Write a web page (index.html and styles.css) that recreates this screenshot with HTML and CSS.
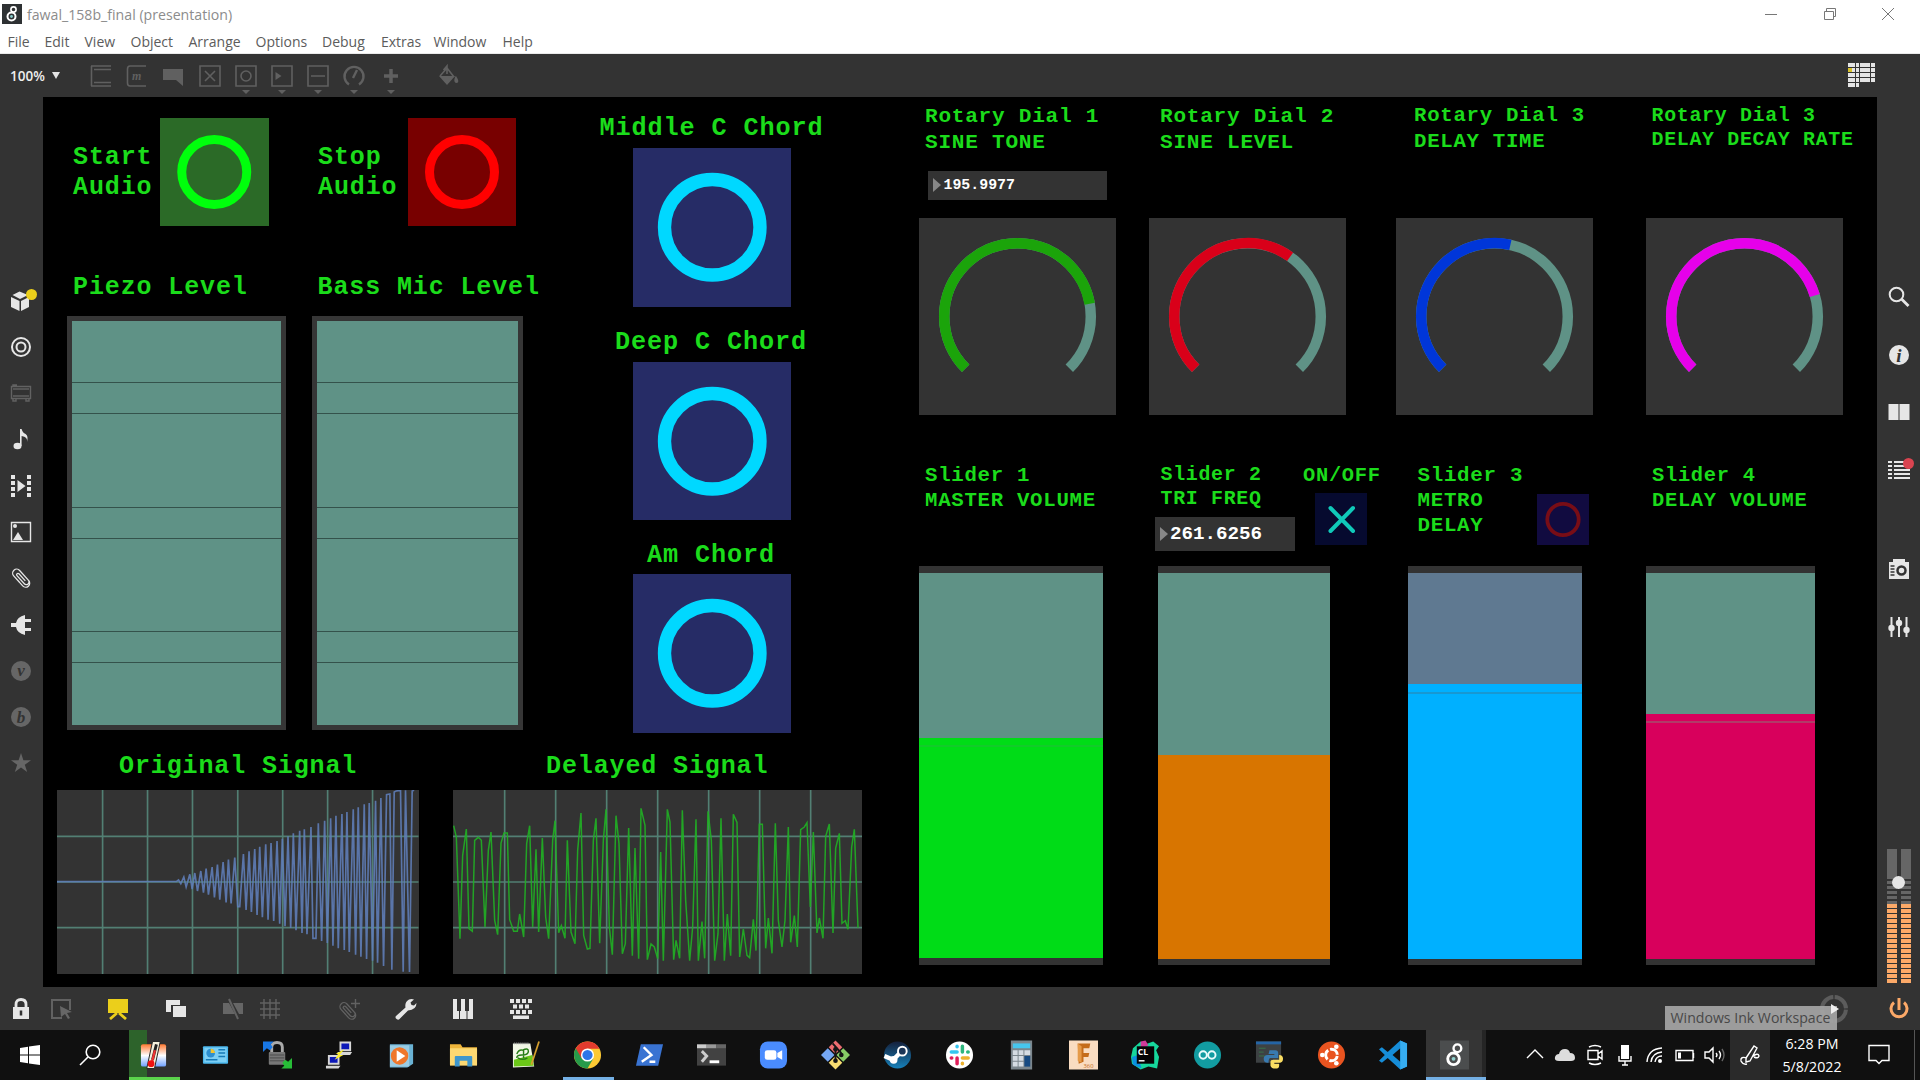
FILE: index.html
```html
<!DOCTYPE html>
<html lang="en">
<head>
<meta charset="utf-8">
<title>fawal_158b_final (presentation)</title>
<link rel="stylesheet" href="styles.css">
</head>
<body>
<header class="titlebar">
  <div class="caption">
    <svg class="app-icon" viewBox="0 0 20 20"><rect width="20" height="20" fill="#2e3133"/><g fill="none" stroke="#fff"><circle cx="9.5" cy="12.5" r="4" stroke-width="2"/><circle cx="11.5" cy="5.5" r="2.6" stroke-width="1.6"/></g><circle cx="9.5" cy="12.5" r="1.4" fill="#8cc"/></svg>
    <span class="caption-text">fawal_158b_final (presentation)</span>
    <div class="window-buttons">
      <svg viewBox="0 0 14 14"><path d="M1 7.500h12"/></svg>
      <svg viewBox="0 0 14 14"><path d="M1.500 4.500h9v8h-9zM3.500 4V1.500h9v8H11"/></svg>
      <svg viewBox="0 0 14 14"><path d="M1 1l12 12M13 1L1 13"/></svg>
    </div>
  </div>
  <nav class="menu"><span>File</span><span>Edit</span><span>View</span><span>Object</span><span>Arrange</span><span>Options</span><span>Debug</span><span>Extras</span><span>Window</span><span>Help</span></nav>
</header>

<div class="toolbar">
  <div class="zoom-level"><span>100%</span><i class="caret"></i></div>
  <div class="tools">
    <svg viewBox="0 0 22 32"><path d="M1 6h20M4 9.500h17M4 22.500h17M1 26h20M1.500 6v20"/></svg>
    <svg viewBox="0 0 22 32"><path d="M20 6H4Q1.500 6 1.500 9v14q0 3 2.500 3h16"/><text x="6" y="19.500" class="tool-m">m</text></svg>
    <svg viewBox="0 0 22 32"><path class="solid" d="M1 9h20v17l-7-6H1z"/></svg>
    <svg viewBox="0 0 22 32"><path d="M1 6h20v20H1zM6 11l10 10M16 11L6 21"/></svg>
    <svg viewBox="0 0 22 32"><path d="M1 6h20v20H1z"/><circle cx="11" cy="16" r="5"/><path class="solid" d="M7 30h8l-4 4z"/></svg>
    <svg viewBox="0 0 22 32"><path d="M1 6h20v20H1z"/><path class="solid" d="M4.500 12l6 4-6 4zM7 30h8l-4 4z"/></svg>
    <svg viewBox="0 0 22 32"><path d="M1 6h20v20H1zM4 16h14"/><path class="solid" d="M7 30h8l-4 4z"/></svg>
    <svg viewBox="0 0 22 32"><path class="bold" d="M6 24.500A9.500 9.500 0 1 1 16 24.500M10 18l4-8"/><path class="solid" d="M7 30h8l-4 4z"/></svg>
    <svg viewBox="0 0 22 32"><path class="heavy" d="M11 9v14M4 16h14"/><path class="solid" d="M7 30h8l-4 4z"/></svg>
    <svg class="bucket" viewBox="0 0 22 32"><path d="M3 16L10 8l7 9M10 14V6L6.500 10"/><path class="solid" d="M2 16h16l-8 9zM19 16q4 6 1 7-4 0-2-6z"/></svg>
  </div>
  <svg class="list-icon" viewBox="0 0 27 25"><path fill="#e4e4e4" d="M0 0h7v4H0zM8 0h3v4H8zM12 0h10v4H12zM23 0h4v4h-4zM4 5h3v4H4zM8 5h3v4H8zM12 5h10v4H12zM23 5h4v4h-4zM0 10h7v4H0zM8 10h3v4H8zM12 10h10v4H12zM23 10h4v4h-4zM0 15h7v4H0zM8 15h3v4H8zM12 15h10v4H12zM23 15h4v4h-4zM0 20h7v4H0zM8 20h3v4H8z"/><path fill="#d9c22c" d="M0 5h4v4H0z"/></svg>
</div>

<main class="workspace">
  <aside class="rail rail-left">
    <svg viewBox="0 0 22 22"><path class="fl" d="M9.500 1.500L18 5l-8 4-7.500-4zM1 7l8.500 4v10L1 17zM11 11l8-4v10l-8 4z"/></svg>
    <svg viewBox="0 0 22 22"><circle class="ln" cx="11" cy="11" r="9"/><circle class="ln" cx="11" cy="11" r="4.500"/></svg>
    <svg class="dim" viewBox="0 0 22 22"><path class="ln thin" d="M1.500 4.500h19v12h-19zM3 7h16M3 14h16M3 17v2h3v-2M16 17v2h3v-2M3 4V3h4"/></svg>
    <svg viewBox="0 0 22 22"><ellipse class="fl" cx="7.500" cy="18" rx="4" ry="3.200"/><path class="fl" d="M10 1h1.600q1 4 4 5 3 2 1.400 8 1-5-5.400-6v10H10z"/></svg>
    <svg viewBox="0 0 22 22"><path class="fl" d="M1 0h4v4H1zM1 6h4v4H1zM1 12h4v4H1zM1 18h4v4H1zM17 0h4v4h-4zM17 6h4v4h-4zM17 12h4v4h-4zM17 18h4v4h-4zM7.500 5l8 6-8 6z"/></svg>
    <svg viewBox="0 0 22 22"><path class="ln thin" d="M1.500 1.500h19v19h-19z"/><circle class="fl" cx="5" cy="5" r="2"/><path class="fl" d="M3 19l5-8 5 8z"/></svg>
    <svg viewBox="0 0 22 22"><path class="ln clip" d="M-4 2.500V-6.500a4 4 0 0 1 8 0V6.500a2.700 2.700 0 0 1-5.400 0V-4.500a1.300 1.300 0 0 1 2.700 0V5M-4 2v5a4 4 0 0 0 8 0" transform="translate(11 11) rotate(-42)"/></svg>
    <svg viewBox="0 0 22 22"><path class="fl" d="M15 1v4h6v3h-6v6h6v3h-6v4Q7 19 6 13H1V9h5Q7 3 15 1z"/></svg>
    <svg class="dim" viewBox="0 0 22 22"><circle class="fl" cx="11" cy="11" r="10"/><text class="badge-letter" x="11" y="16" text-anchor="middle">v</text></svg>
    <svg class="dim" viewBox="0 0 22 22"><circle class="fl" cx="11" cy="11" r="10"/><text class="badge-letter" x="11" y="17" text-anchor="middle">b</text></svg>
    <svg class="dim" viewBox="0 0 22 22"><path class="fl" d="M11 1l2.400 7.300H21l-6.200 4.500 2.400 7.300L11 15.600l-6.200 4.500 2.400-7.300L1 8.300h7.600z"/></svg>
    <i class="notice notice-yellow"></i>
  </aside>

  <section class="patcher">
    <div class="obj label start-label">Start<br>Audio</div>
    <svg class="obj bang start" viewBox="0 0 108 108"><circle cx="54" cy="54" r="32.500"/></svg>
    <div class="obj label stop-label">Stop<br>Audio</div>
    <svg class="obj bang stop" viewBox="0 0 108 108"><circle cx="54" cy="54" r="32.500"/></svg>
    <div class="obj label piezo-label">Piezo Level</div>
    <div class="obj meter piezo"><i></i><i></i><i></i><i></i><i></i><i></i></div>
    <div class="obj label bass-label">Bass Mic Level</div>
    <div class="obj meter bass"><i></i><i></i><i></i><i></i><i></i><i></i></div>

    <div class="obj label middle-label">Middle C Chord</div>
    <svg class="obj bang chord chord-middle" viewBox="0 0 158 158"><circle cx="79" cy="79" r="47.600"/></svg>
    <div class="obj label deep-label">Deep C Chord</div>
    <svg class="obj bang chord chord-deep" viewBox="0 0 158 158"><circle cx="79" cy="79" r="47.600"/></svg>
    <div class="obj label am-label">Am Chord</div>
    <svg class="obj bang chord chord-am" viewBox="0 0 158 158"><circle cx="79" cy="79" r="47.600"/></svg>

    <div class="obj label original-label">Original Signal</div>
    <svg class="obj scope scope-original" viewBox="171 149 1086 552" preserveAspectRatio="none">
      <path class="grid" d="M308 149v552M443 149v552M578 149v552M714 149v552M849 149v552M984 149v552M1119 149v552M171 288h1086M171 425h1086M171 562h1086"/>
      <polyline class="wave-blue" points="171,424 530,423 536,419 543,430 552,410 559,440 570,402 577,446 585,398 593,452 603,392 611,457 619,385 626,463 637,380 644,471 653,373 660,478 670,365 679,486 686,358 694,489 705,352 714,499 720,499 731,341 739,509 748,333 755,515 765,326 772,524 780,319 788,531 798,312 805,538 814,308 822,542 832,302 840,550 848,295 856,558 865,288 873,563 881,279 889,570 900,271 907,578 914,267 922,582 934,260 940,594 949,594 956,249 966,602 975,241 983,608 993,234 1000,616 1009,226 1016,624 1027,221 1034,629 1042,215 1049,635 1061,207 1068,643 1076,201 1084,649 1094,192 1101,656 1109,188 1119,661 1128,181 1134,667 1144,173 1152,677 1161,163 1171,161 1177,688 1184,155 1190,152 1203,150 1211,694 1218,150 1230,695 1238,152 1244,150"/>
    </svg>
    <div class="obj label delayed-label">Delayed Signal</div>
    <svg class="obj scope scope-delayed" viewBox="39 149 1227 552" preserveAspectRatio="none">
      <path class="grid" d="M194 149v552M347 149v552M500 149v552M653 149v552M806 149v552M959 149v552M1112 149v552M39 288h1227M39 425h1227M39 562h1227"/>
      <polyline class="wave-green" points="41,256 49,290 60,595 68,345 79,266 87,565 97,573 104,300 115,291 124,300 135,560 145,330 153,275 164,540 173,583 183,308 192,278 202,278 209,538 221,573 232,573 239,521 251,590 260,310 269,256 278,560 288,327 296,575 307,293 317,530 326,595 338,300 345,241 356,577 364,556 375,594 382,300 393,575 405,610 413,330 423,218 431,585 442,626 450,624 460,300 468,234 479,609 490,300 498,207 508,560 517,643 528,226 537,310 547,640 556,610 566,263 577,646 585,323 596,655 603,204 615,255 622,658 633,611 643,620 653,655 662,335 670,661 682,207 690,245 701,658 708,600 719,654 727,210 737,480 749,661 758,560 768,237 775,661 786,544 794,654 804,213 814,300 824,661 834,580 843,234 853,661 862,521 872,646 880,222 891,246 899,650 910,566 921,645 929,652 940,537 948,631 958,252 967,252 977,624 985,533 996,639 1006,249 1015,540 1026,620 1035,540 1045,260 1052,606 1063,526 1072,620 1082,268 1093,260 1101,247 1111,500 1120,275 1131,578 1138,533 1149,594 1157,288 1168,251 1179,578 1187,323 1198,279 1206,549 1216,541 1224,567 1235,320 1243,267 1254,562"/>
    </svg>

    <div class="obj label dial1-label">Rotary Dial 1<br>SINE TONE</div>
    <div class="obj label dial2-label">Rotary Dial 2<br>SINE LEVEL</div>
    <div class="obj label dial3-label">Rotary Dial 3<br>DELAY TIME</div>
    <div class="obj label dial4-label">Rotary Dial 3<br>DELAY DECAY RATE</div>
    <div class="obj number number-sine"><i></i>195.9977</div>
    <svg class="obj dial dial1" viewBox="0 0 197 197"><path d="M46.700 150.300A73.300 73.300 0 1 1 150.300 150.300"/><path class="value" pathLength="270" stroke-dasharray="215 400" d="M46.700 150.300A73.300 73.300 0 1 1 150.300 150.300"/></svg>
    <svg class="obj dial dial2" viewBox="0 0 197 197"><path d="M46.700 150.300A73.300 73.300 0 1 1 150.300 150.300"/><path class="value" pathLength="270" stroke-dasharray="170.500 400" d="M46.700 150.300A73.300 73.300 0 1 1 150.300 150.300"/></svg>
    <svg class="obj dial dial3" viewBox="0 0 197 197"><path d="M46.700 150.300A73.300 73.300 0 1 1 150.300 150.300"/><path class="value" pathLength="270" stroke-dasharray="147.500 400" d="M46.700 150.300A73.300 73.300 0 1 1 150.300 150.300"/></svg>
    <svg class="obj dial dial4" viewBox="0 0 197 197"><path d="M46.700 150.300A73.300 73.300 0 1 1 150.300 150.300"/><path class="value" pathLength="270" stroke-dasharray="208.500 400" d="M46.700 150.300A73.300 73.300 0 1 1 150.300 150.300"/></svg>

    <div class="obj label slider1-label">Slider 1<br>MASTER VOLUME</div>
    <div class="obj label slider2-label">Slider 2<br>TRI FREQ</div>
    <div class="obj label onoff-label">ON/OFF</div>
    <div class="obj label slider3-label">Slider 3<br>METRO<br>DELAY</div>
    <div class="obj label slider4-label">Slider 4<br>DELAY VOLUME</div>
    <div class="obj number number-tri"><i></i>261.6256</div>
    <svg class="obj toggle" viewBox="0 0 52 52"><path d="M15.500 15l22.500 23M38 15L15.500 38"/></svg>
    <svg class="obj bang metro" viewBox="0 0 52 51"><circle cx="26" cy="25.500" r="15.700"/></svg>
    <div class="obj slider slider1"><i></i></div>
    <div class="obj slider slider2"><i></i></div>
    <div class="obj slider slider3"><i></i></div>
    <div class="obj slider slider4"><i></i></div>
  </section>

  <aside class="rail rail-right">
    <svg viewBox="0 0 22 22"><circle class="ln" cx="8.500" cy="8.500" r="6.800"/><path class="ln wide" d="M13.500 13l7 7"/></svg>
    <svg viewBox="0 0 22 22"><circle class="fl" cx="11" cy="11" r="10"/><text class="info-letter" x="11" y="17.500" text-anchor="middle">i</text></svg>
    <svg viewBox="0 0 22 22"><path class="fl" d="M.5 3h10v16H.5zM11.500 3h10v16h-10z"/></svg>
    <svg viewBox="0 0 22 22"><path class="fl" d="M0 2h4v2H0zM6 2h16v2H6zM0 6h4v2H0zM6 6h16v2H6zM0 10h4v2H0zM6 10h16v2H6zM0 14h4v2H0zM6 14h16v2H6zM0 18h4v2H0zM6 18h16v2H6z"/></svg>
    <svg class="camera" viewBox="0 0 22 22"><path class="fl" d="M5 1h12v3h4v17H1V4h4z"/><circle cx="13.500" cy="12.500" r="4" fill="none" stroke="#333" stroke-width="2.500"/><path stroke="#333" stroke-width="1.300" d="M2.500 8h4M2.500 11h4M2.500 14h4M2.500 17h4"/></svg>
    <svg viewBox="0 0 22 22"><path class="ln" d="M3.500 1v20M11 1v20M18.500 1v20"/><g class="fl"><circle cx="3.500" cy="12" r="3.200"/><circle cx="11" cy="7" r="3.200"/><circle cx="18.500" cy="14" r="3.200"/></g></svg>
    <div class="gain"><i></i><i></i><b></b></div>
    <i class="notice notice-red"></i>
  </aside>
</main>

<footer class="bottombar">
  <svg viewBox="0 0 22 22"><path class="ln wide" d="M6 10V6.500q0-5 5-5t5 5V10"/><path class="fl" d="M3 9h16v12H3z"/><path d="M11 12.500v5" stroke="#333" stroke-width="2.500"/></svg>
  <svg class="dim" viewBox="0 0 22 22"><path class="ln" d="M12 20H2V2h18v10"/><path class="fl" d="M10 8l12 6-5 1 3 5-2 1-3-5-4 3z"/></svg>
  <svg class="yellow" viewBox="0 0 22 22"><path class="fl" d="M1 1h20v14H1z"/><path class="ln wide" d="M10 15l-7 6M12 15l7 6"/></svg>
  <svg viewBox="0 0 22 22"><path class="fl" d="M1 2h14v5H6v7H1zM8 8h13v11H8z"/></svg>
  <svg class="dim" viewBox="0 0 22 22"><path class="fl" d="M1 5h6l6 11H1zM11 5h10v11h-4z"/><path class="ln" d="M7 1l9 20"/></svg>
  <svg class="dim" viewBox="0 0 22 22"><path class="ln thin" d="M5 1v20M11 1v20M17 1v20M1 5h20M1 11h20M1 17h20"/></svg>
  <svg class="dim" viewBox="0 0 22 22"><path class="ln clip" d="M-4 2.500V-4.500a4 4 0 0 1 8 0V6.500a2.700 2.700 0 0 1-5.400 0V-3.500a1.300 1.300 0 0 1 2.700 0V5M-4 2v5a4 4 0 0 0 8 0" transform="translate(9 12) rotate(-42)"/><path class="ln thin" d="M17.500 1v9M13 5.500h9"/></svg>
  <svg viewBox="0 0 22 22"><path class="fl" d="M1 18L10.500 9.500Q9.500 4 14 1.500q2.500-1 5 0L15.500 4.500l1 2.500 2.500.5L21.500 5q0 7-8.500 7.500L4 21.500q-2 .5-3-1t0-2.500z"/></svg>
  <svg viewBox="0 0 22 22"><path class="fl" d="M1 1h4v12h2v8H1zM9 1h4v12h1.500v8H8v-8h1zM17 1h4v20h-5.500v-8H17z"/></svg>
  <svg viewBox="0 0 22 22"><path class="fl" d="M0 1h4v4H0zM6 1h4v4H6zM12 1h4v4h-4zM18 1h4v4h-4zM3 6.500h4v4H3zM9 6.500h4v4H9zM15 6.500h4v4h-4zM0 12h4v4H0zM6 12h4v4H6zM12 12h4v4h-4zM18 12h4v4h-4zM3 17.500h16v3.500H3z"/></svg>
  <svg class="transport" viewBox="0 0 30 30"><circle cx="15" cy="15" r="12" pathLength="80" stroke-dasharray="18.500 1.500" stroke-dashoffset="-.75"/></svg>
  <svg class="power" viewBox="0 0 22 22"><path d="M6 4.500a8 8 0 1 0 10 0M11 0v12"/></svg>
  <div class="tooltip">Windows Ink Workspace</div>
  <i class="play"></i>
</footer>

<div class="taskbar">
  <div class="cell start-cell"><svg width="20" height="20" viewBox="0 0 20 20"><path fill="#fff" d="M0 3l8-1.200v7.700H0zM9 1.600L20 0v9.500H9zM0 10.500h8v7.700L0 17zM9 10.500h11V20L9 18.400z"/></svg></div>
  <div class="cell search-cell"><svg width="22" height="22" viewBox="0 0 22 22"><g fill="none" stroke="#fff" stroke-width="1.600"><circle cx="14" cy="8" r="6.800"/><path d="M9 13l-8 8"/></g></svg></div>
  <div class="apps">
    <div class="cell thermo-cell"><svg viewBox="0 0 30 30"><defs><linearGradient id="heat" x2="0" y2="1"><stop stop-color="#ff7a33"/><stop offset=".5" stop-color="#fff"/><stop offset="1" stop-color="#6fa0ff"/></linearGradient></defs><rect x="2" y="4" width="26" height="23" rx="2" fill="url(#heat)"/><path d="M14 1h8l-6 28H8z" fill="#f5f0dc" stroke="#222"/><path d="M18 4L14 20" stroke="#222" stroke-width="3"/><path d="M16.500 10l-3 12" stroke="#e33" stroke-width="2.400"/><circle cx="12.500" cy="24" r="3.500" fill="#e11"/></svg></div>
    <div class="cell"><svg viewBox="0 0 30 30"><rect x="2" y="6" width="26" height="18" rx="1" fill="#4bb8ee"/><rect x="3.500" y="7.500" width="23" height="15" fill="#7ccff5"/><circle cx="10" cy="13" r="4.500" fill="#2d8fd0"/><path d="M10 13V8.500a4.500 4.500 0 0 1 4.500 4.500z" fill="#f0c531"/><path d="M18 9.500h7M18 13h7M18 16.500h7M5 20h12" stroke="#167bb8" stroke-width="1.500"/></svg></div>
    <div class="cell"><svg viewBox="0 0 30 30"><path d="M9 13V7q0-5 5.500-5T20 7v6" fill="none" stroke="#aaa" stroke-width="3"/><rect x="6" y="12" width="17" height="13" rx="1" fill="#777"/><path d="M7 15h15M7 18h15M7 21h15" stroke="#4c4c4c"/><path d="M0 1h11L8 4l2 3-3 3-3-2-4 4z" fill="#1877e6"/><path d="M30 18v11H19l3-3-2-3 3-3 3 2z" fill="#27bd37"/></svg></div>
    <div class="cell"><svg viewBox="0 0 30 30"><g fill="#d7d7d7"><path d="M15 1h12v10H15zM13 12h15l-2 3H13zM3 15h12v10H3zM1 26h15l-2 3H1z"/></g><path fill="#0c18b9" d="M17 3h8v6h-8zM5 17h8v6H5z"/><path d="M20 9l-5 6h4l-9 5 4-6h-3z" fill="#ffef28"/></svg></div>
    <div class="cell"><svg viewBox="0 0 30 30"><path d="M3 4h24v20l-6 4H3z" fill="#6ab2d4"/><path d="M3 5h20v22H3z" fill="#9bcce3"/><circle cx="13" cy="16" r="9" fill="#ef772b"/><path fill="#fff" d="M10 10l9 6-9 6z"/></svg></div>
    <div class="cell"><svg viewBox="0 0 30 30"><path d="M1 4h11l2 3h15v18H1z" fill="#efb53a"/><path d="M1 8h28v18H1z" fill="#fcd872"/><path d="M6 27V17q0-1 1-1h16q1 0 1 1v10h-5v-6h-8v6z" fill="#3e96cc"/></svg></div>
    <div class="cell"><svg viewBox="0 0 30 30"><path d="M2 3h18l4 24-22 1z" fill="#f2f7e6"/><path d="M3 20l19-5 1.500 11L3 27z" fill="#6bc718"/><path d="M6 14q2-5 6-4 6-3 6 1 0 4-7 4-5 0-5 3M7 18q5 3 10 0M13 10v8" stroke="#287d18" stroke-width="1.500" fill="none"/><path d="M29 1L21 25" stroke="#d6a02e" stroke-width="1.800"/><path d="M3 3h16" stroke="#999" stroke-dasharray="1 1" stroke-width="2"/></svg></div>
    <div class="cell chrome-cell"><svg viewBox="0 0 30 30"><circle cx="15" cy="15" r="14" fill="#fcc934"/><path d="M2.900 8a14 14 0 0 0 12.100 21l6-10.500L15 15z" fill="#279b4a"/><path d="M15 8.500h12.300A14 14 0 0 0 2.900 8l6 10.500z" fill="#e33b2e"/><circle cx="15" cy="15" r="6.800" fill="#fff"/><circle cx="15" cy="15" r="5.300" fill="#2d75e8"/></svg></div>
    <div class="cell"><svg viewBox="0 0 30 30"><path d="M6 4h23l-5 22H1z" fill="#3973d2"/><path d="M9 7l8 8-10 7M15 22h6" fill="none" stroke="#fff" stroke-width="2.500"/></svg></div>
    <div class="cell"><svg viewBox="0 0 30 30"><path d="M0 4h30v22H0z" fill="#424242"/><path d="M0 4h10v4H0z" fill="#ccc"/><path d="M10 4h10v4H10z" fill="#999"/><path d="M20 4h10v4H20z" fill="#666"/><path d="M5 11l5 5-5 6" fill="none" stroke="#ccc" stroke-width="3"/><path d="M13 20.500h10v3H13z" fill="#fff"/></svg></div>
    <div class="cell"><svg viewBox="0 0 30 30"><rect x="1" y="1" width="28" height="28" rx="8" fill="#4a8cff"/><rect x="6" y="10" width="12" height="10" rx="2.500" fill="#fff"/><path fill="#fff" d="M19 13l5-3v10l-5-3z"/></svg></div>
    <div class="cell"><svg viewBox="0 0 30 30"><path d="M15 0l7 7-7 7-7-7z" fill="#ee6d70"/><path d="M7 8l7 7-7 7-7-7z" fill="#75a7f3"/><path d="M23 8l7 7-7 7-7-7z" fill="#87cc66"/><path d="M15 16l7 7-7 7-7-7z" fill="#f9dd71"/><path d="M12 3l9 10M15 7v14" stroke="#161616" stroke-width="2"/><g fill="#161616"><circle cx="15" cy="21" r="2.400"/><circle cx="21" cy="15" r="2.400"/><circle cx="15" cy="9" r="2.400"/></g></svg></div>
    <div class="cell"><svg viewBox="0 0 30 30"><defs><linearGradient id="steam" x2="0" y2="1"><stop stop-color="#15203b"/><stop offset="1" stop-color="#1681ba"/></linearGradient></defs><circle cx="15" cy="15" r="14" fill="url(#steam)"/><path d="M1.500 16l9 4 7-7" stroke="#fff" stroke-width="4.500" fill="none"/><circle cx="20" cy="11" r="4.500" stroke="#fff" stroke-width="2" fill="#1b3556"/><circle cx="11" cy="20" r="4" fill="#fff"/></svg></div>
    <div class="cell"><svg viewBox="0 0 30 30"><circle cx="15" cy="15" r="14" fill="#fff"/><g stroke-width="3.600" stroke-linecap="round"><path d="M12.500 6v.5M6.500 12h6" stroke="#36c5f0"/><path d="M18 6v6M23.500 12h.5" stroke="#2eb67d"/><path d="M12.500 18v6M6.500 18h.5" stroke="#e01e5a"/><path d="M18 24v-.5M18 18h6" stroke="#ecb22e"/></g></svg></div>
    <div class="cell"><svg viewBox="0 0 30 30"><path d="M4 0h22v30H4z" fill="#7b868d"/><path d="M6 3h18v5H6z" fill="#46c6ee"/><path d="M6 10h5v5H6zM12 10h5v5h-5zM18 10h6v5h-6zM6 16h5v5H6zM12 16h5v5h-5zM6 22h5v5H6zM12 22h5v5h-5z" fill="#d5dce3"/><path d="M18 16h6v11h-6z" fill="#164a82"/></svg></div>
    <div class="cell"><svg viewBox="0 0 30 30"><path d="M0 0h30v30H0z" fill="#f9dcc1"/><path d="M9 3h13l-1 5h-6v5h6l-1 4h-5v5l-5 2z" fill="#c56c1a"/><path d="M9 3l4 3v17l-4-2z" fill="#e59a49"/><text x="15" y="28.500" font-family="Open Sans" font-size="6" fill="#c56c1a">360</text></svg></div>
    <div class="cell"><svg viewBox="0 0 30 30"><path d="M2 8L10 1l5 3 8-3 6 5-3 4 3 7-2 12-9-2-8 3-9-6-1-7z" fill="#16d79c"/><path d="M1 17l6-2 4 14-9-4z" fill="#0c91df"/><path d="M10 1l5-1 3 5-8 4z" fill="#cf3b99"/><path d="M6 6h18v18H6z" fill="#050505"/><text x="7" y="15" font-family="Open Sans" font-weight="700" font-size="9" fill="#fff">CL</text><path d="M8 21h6" stroke="#fff" stroke-width="1.500"/></svg></div>
    <div class="cell"><svg viewBox="0 0 30 30"><circle cx="15" cy="15" r="14" fill="#129ca1"/><g fill="none" stroke="#e9fbfb" stroke-width="2"><circle cx="10.500" cy="15" r="3.800"/><circle cx="19.500" cy="15" r="3.800"/></g></svg></div>
    <div class="cell"><svg viewBox="0 0 30 30"><path d="M1 1h26v22H1z" fill="#3d4143"/><path d="M1 1h26v3H1z" fill="#2464a5"/><path d="M4 8h7M4 12h5M4 16h6" stroke="#38734a"/><path d="M15 10h6q3 0 3 3v5h-8q-2 0-2 5h-1q-4 0-4-4t4-4h7v-1h-6z" fill="#387ab0"/><path d="M25 15q4 0 4 4t-4 4h-5v1h5v2q0 3-4 3t-5-3v-4q0-2 3-2h6z" fill="#fadd62"/></svg></div>
    <div class="cell"><svg viewBox="0 0 30 30"><circle cx="15" cy="15" r="14" fill="#e95420"/><circle cx="15" cy="15" r="6" fill="none" stroke="#fff" stroke-width="3" stroke-dasharray="10.500 2" stroke-dashoffset="-1"/><g fill="#fff"><circle cx="5.500" cy="15" r="2.400"/><circle cx="20" cy="6.500" r="2.400"/><circle cx="20" cy="23.500" r="2.400"/></g></svg></div>
    <div class="cell"><svg viewBox="0 0 30 30"><path d="M22 0l7 3v24l-7 3L9 18l-6 5-3-2 6-6-6-6 3-2 6 5zM22 8l-8 7 8 7z" fill="#168dd8" fill-rule="evenodd"/><path d="M22 0l7 3v24l-7 3z" fill="#36adf1"/></svg></div>
    <div class="cell max-cell"><svg viewBox="0 0 30 30"><path d="M0 0h30v30H0z" fill="#4b4d4e"/><g fill="none" stroke="#fff"><circle cx="14" cy="19" r="6" stroke-width="3"/><circle cx="18" cy="8" r="4" stroke-width="2.500"/></g><circle cx="14" cy="19" r="2" fill="#8fd0cd"/></svg></div>
  </div>
  <div class="tray">
    <svg viewBox="0 0 22 22"><path d="M3 14l8-8 8 8"/></svg>
    <svg viewBox="0 0 22 22"><path d="M5 17q-5 0-4-4 1-3 4-3 1-5 6-5 4 0 5 4 5 0 5 5 0 3-4 3z" fill="#ddd" stroke="none"/></svg>
    <svg viewBox="0 0 22 22"><path d="M4 6.500h10v9H4zM14 10l4-3v8l-4-3M5 3q6-3 12 0M5 19q6 3 12 0"/></svg>
    <svg viewBox="0 0 22 22"><rect x="7" y="1" width="8" height="14" fill="#fff" stroke="none"/><path d="M5 12v5h12v-5M11 17v4M8 21h6"/></svg>
    <svg viewBox="0 0 22 22"><path d="M3 18Q4 5 18 4M7 18Q8 9 18 8M11 18q1-6 7-6"/><circle cx="16" cy="17" r="2" fill="#fff" stroke="none"/></svg>
    <svg viewBox="0 0 22 22"><path d="M2 6.500h17v10H2zM19.500 9v5"/><path d="M4 8.500h3v6H4z" fill="#fff" stroke="none"/></svg>
    <svg viewBox="0 0 22 22"><path d="M1 8h4l4-4v14l-4-4H1zM12 9q2 2 0 4M15 7q3 4 0 8"/><path d="M18 5q4 6 0 12" stroke="#666"/></svg>
    <div class="ink"><svg viewBox="0 0 22 22"><path d="M7 14L15 2l3 2-7 13-4 1zM8 14q-7-2-6 3 2 4 6 3M13 13q6-5 7-1-1 3-5 1"/></svg></div>
    <div class="clock"><span>6:28 PM</span><span>5/8/2022</span></div>
    <svg class="action-center" viewBox="0 0 22 22"><path d="M1 1.500h20v15h-7l-3 3-3-3H1z"/></svg>
    <i class="peek"></i>
  </div>
</div>
</body>
</html>
```
FILE: styles.css
```css
* { box-sizing: border-box; }
body {
  margin: 0; width: 1920px; height: 1080px; overflow: hidden;
  display: grid; grid-template-rows: 54px 43px 890px 43px 50px;
  background: #333; font-family: "Open Sans", "Noto Sans", sans-serif;
}
svg { display: block; }

/* Title bar and menu */
.titlebar { background: #fff; border-bottom: 1px solid #eaeaea; }
.caption { display: flex; align-items: center; height: 28px; padding-left: 2px; }
.app-icon { width: 20px; height: 20px; }
.caption-text { margin-left: 5px; font-size: 14.150px; color: #8c8c8c; white-space: nowrap; }
.window-buttons { margin-left: auto; display: flex; gap: 44.500px; padding-right: 25px; }
.window-buttons svg { width: 14px; height: 14px; fill: none; stroke: #777; stroke-width: 1; }
.menu {
  display: grid; grid-template-columns: 37px 40px 46px 58px 67px 66.500px 59px 52.500px 69px 50px;
  padding: 1px 0 0 7.500px; font-size: 14px; line-height: 26px; color: #5c5c5c;
}

/* Top toolbar */
.toolbar { display: flex; align-items: center; padding-right: 45px; }
.zoom-level { display: flex; align-items: center; gap: 7px; width: 90px; padding-left: 10px; color: #eee; font-size: 13.500px; font-weight: 600; }
.caret { border: 4px solid transparent; border-top: 7px solid #e4e4e4; border-bottom: 0; }
.tools { display: flex; gap: 14.200px; }
.tools svg { width: 22px; height: 32px; overflow: visible; fill: none; stroke: #606060; stroke-width: 1.600; }
.tools .solid { fill: #606060; stroke: none; }
.tools .bold { stroke-width: 2.400; }
.tools .heavy { stroke-width: 3.500; }
.tool-m { font: italic 700 12px "Liberation Serif", serif; fill: #606060; stroke: none; }
.tools .bucket { margin-left: 21px; }
.list-icon { width: 27px; height: 25px; margin-left: auto; }

/* Side rails */
.workspace { display: grid; grid-template-columns: 43px 1834px 43px; }
.rail { position: relative; display: flex; flex-direction: column; align-items: center; }
.rail svg, .bottombar svg { width: 22px; height: 22px; flex: none; }
.fl { fill: #e6e6e6; }
.ln { fill: none; stroke: #e6e6e6; stroke-width: 2; }
.thin { stroke-width: 1.400; }
.wide { stroke-width: 2.800; }
.clip { stroke-width: 1.300; }
.dim .fl { fill: #666; }
.dim .ln { stroke: #626262; }
.yellow .fl { fill: #ebcf1b; }
.yellow .ln { stroke: #ebcf1b; }
.badge-letter { font: italic 700 17px "Liberation Serif", serif; fill: #333; }
.info-letter { font: italic 700 19px "Liberation Serif", serif; fill: #333; }
.rail-left { padding: 192.500px 1px 0 0; gap: 24.300px; }
.rail-right { padding-top: 189px; gap: 35.600px; }
.camera { margin-top: 42px; }
.notice { position: absolute; border-radius: 50%; width: 11px; height: 11px; }
.notice-yellow { left: 26px; top: 192px; background: #ebcf1b; }
.notice-red { left: 26px; top: 361px; background: #da4450; }
.gain { position: relative; display: flex; gap: 4px; height: 135px; margin-top: 175px; }
.gain i {
  width: 10px;
  background:
    repeating-linear-gradient(to bottom, transparent 0 4px, #333 4px 5px) 0 55px / 100% 80px no-repeat,
    linear-gradient(#fca968, #fca968) 0 55px / 100% 80px no-repeat,
    repeating-linear-gradient(to bottom, #333 0 2px, #666 2px 5px) 0 30px / 100% 25px no-repeat,
    #666;
}
.gain b { position: absolute; left: 5.500px; top: 27.500px; width: 13px; height: 13px; border-radius: 50%; background: #e6e6e6; }

/* Patcher canvas: --x and --y are window coordinates of each object */
.patcher { position: relative; background: #000; overflow: hidden; }
.obj {
  position: absolute; left: calc(var(--x) * 1px - 43px); top: calc(var(--y) * 1px - 97px);
  width: calc(var(--w) * 1px); height: calc(var(--h) * 1px);
}
.label {
  width: auto; height: auto; white-space: nowrap; color: #1bdc1b;
  font: 700 25px/30px "Courier New", "Liberation Mono", monospace; letter-spacing: .035em;
}
.start-label { --x: 73; --y: 142.500; }
.stop-label { --x: 318; --y: 142.500; }
.piezo-label { --x: 73; --y: 272.500; }
.bass-label { --x: 317.500; --y: 272.500; }
.middle-label { --x: 599.500; --y: 114; font-size: 25.200px; }
.deep-label { --x: 615; --y: 327.500; font-size: 25.200px; }
.am-label { --x: 647; --y: 540.500; font-size: 25.200px; }
.original-label { --x: 119; --y: 751.500; }
.delayed-label { --x: 546; --y: 751.500; }
.dial1-label { --x: 925; --y: 102.500; font-size: 21.100px; line-height: 26px; }
.dial2-label { --x: 1160; --y: 102.500; font-size: 21.100px; line-height: 26px; }
.dial3-label { --x: 1414; --y: 102.500; font-size: 20.700px; line-height: 26px; }
.dial4-label { --x: 1651.500; --y: 104.200; font-size: 19.900px; line-height: 24px; }
.slider1-label { --x: 925; --y: 462.500; font-size: 20.700px; line-height: 25.300px; }
.slider2-label { --x: 1160.500; --y: 462.500; font-size: 19.900px; line-height: 24px; }
.onoff-label { --x: 1303; --y: 462.500; font-size: 20.400px; line-height: 25px; }
.slider3-label { --x: 1417.500; --y: 462.900; font-size: 20.800px; line-height: 25.300px; }
.slider4-label { --x: 1652; --y: 462.500; font-size: 20.400px; line-height: 25px; }

.bang circle { fill: none; }
.start { --x: 160; --y: 118; --w: 108.500; --h: 108; background: #2b6a27; stroke: #00ff0c; stroke-width: 9px; }
.stop { --x: 408; --y: 118; --w: 108; --h: 108; background: #780000; stroke: #f00; stroke-width: 9px; }
.chord { --x: 632.500; --w: 158.500; --h: 158.500; background: #262c66; stroke: #00d8ff; stroke-width: 13.300px; }
.chord-middle { --y: 148; }
.chord-deep { --y: 361.500; }
.chord-am { --y: 574; }
.metro { --x: 1537; --y: 494; --w: 52; --h: 51; background: #110b40; stroke: #780d16; stroke-width: 3.800px; }
.toggle { --x: 1315; --y: 493; --w: 52; --h: 52; background: #060a2f; stroke: #10c9b9; stroke-width: 4px; stroke-linecap: round; }

.meter { display: flex; flex-direction: column; background: #5f9286; border: 5px solid #363636; padding-top: 61px; gap: 30px; }
.meter i { height: 1px; background: #34524b; }
.meter i:nth-child(even) { margin-bottom: 63px; }
.meter i:nth-child(4) { margin-bottom: 62px; }
.meter i:last-child { margin-bottom: 0; }
.piezo { --x: 67; --y: 316; --w: 219; --h: 414; }
.bass { --x: 312; --y: 316; --w: 211; --h: 414; }

.scope { background: #333; }
.grid { fill: none; stroke: #527f73; stroke-width: 5; }
.wave-blue { fill: none; stroke: #607eba; stroke-width: 5; stroke-opacity: .88; }
.wave-green { fill: none; stroke: #20b024; stroke-width: 4.500; stroke-opacity: .9; }
.scope-original { --x: 57; --y: 789.500; --w: 361.500; --h: 184; }
.scope-delayed { --x: 453; --y: 789.500; --w: 409; --h: 184; }

.dial { --y: 218; --w: 197; --h: 197; background: #333; fill: none; stroke: #5f9286; stroke-width: 10.500px; }
.dial1 { --x: 919; }
.dial2 { --x: 1149; }
.dial3 { --x: 1395.500; }
.dial4 { --x: 1645.500; }
.dial1 .value { stroke: #1ba40a; }
.dial2 .value { stroke: #d90019; }
.dial3 .value { stroke: #0036d9; }
.dial4 .value { stroke: #e600ea; }

.number { display: flex; align-items: center; background: #333; color: #fff; font-family: "Courier New", "Liberation Mono", monospace; font-weight: 700; padding-left: 5px; }
.number i { border: 7px solid transparent; border-left: 8px solid #888; border-right: 0; }
.number-sine { --x: 928; --y: 171; --w: 179; --h: 28.500; font-size: 14.900px; gap: 2.500px; }
.number-tri { --x: 1154.500; --y: 517; --w: 140.500; --h: 34; font-size: 19.200px; gap: 2.500px; }

.slider { --y: 566; --h: 399; display: flex; flex-direction: column; justify-content: flex-end; background: #5f9286; border: solid #333; border-width: 7px 0 6px; }
.slider1 { --x: 919; --w: 184; border-bottom-width: 7px; }
.slider2 { --x: 1158; --w: 172; }
.slider3 { --x: 1408; --w: 174; background: #5f7991; }
.slider4 { --x: 1645.500; --w: 169.500; }
.slider1 i { height: 220px; background: linear-gradient(#00dc17 7px, #12cb2a 7px 9px, #00dc17 9px); }
.slider2 i { height: 204px; background: #d87500; }
.slider3 i { height: 275px; background: linear-gradient(#00b0ff 8px, #1898d2 8px 10px, #00b0ff 10px); }
.slider4 i { height: 245px; background: linear-gradient(#d8005c 7px, #b13b68 7px 9px, #d8005c 9px); }

/* Bottom toolbar */
.bottombar { position: relative; display: flex; align-items: center; padding-left: 10px; }
.bottombar svg:nth-child(2) { margin-left: 17.500px; }
.bottombar svg:nth-child(3) { margin-left: 35.500px; }
.bottombar svg:nth-child(4) { margin-left: 35.500px; }
.bottombar svg:nth-child(5) { margin-left: 35.500px; }
.bottombar svg:nth-child(6) { margin-left: 14.500px; }
.bottombar svg:nth-child(7) { margin-left: 57px; }
.bottombar svg:nth-child(8) { margin-left: 35px; }
.bottombar svg:nth-child(9) { margin-left: 35.500px; }
.bottombar svg:nth-child(10) { margin-left: 35.500px; }
.bottombar .transport { width: 30px; height: 30px; margin-left: auto; fill: none; stroke: #5c5c5c; stroke-width: 4; }
.bottombar .power { margin: 0 10.500px 0 38.500px; fill: none; stroke: #fca968; stroke-width: 3; overflow: visible; }
.tooltip {
  position: absolute; left: 1664.500px; top: 19px; width: 172px; height: 24px;
  background: rgba(165, 165, 165, .92); color: #484848; font-size: 14.100px; line-height: 24px; text-align: center; white-space: nowrap;
}
.play { position: absolute; left: 1831px; top: 17px; border: 5px solid transparent; border-left: 8px solid #eee; border-right: 0; }

/* Taskbar */
.taskbar { display: flex; background: #101010; }
.cell { display: flex; align-items: center; justify-content: center; height: 50px; }
.start-cell, .search-cell { width: 60px; }
.apps { display: flex; padding-left: 3px; }
.apps .cell { width: 61.960px; }
.apps svg { width: 29px; height: 30px; flex: none; }
.thermo-cell {
  background:
    linear-gradient(#5bd34c, #5bd34c) 6px 47px / 51px 3px no-repeat,
    linear-gradient(90deg, transparent 6px, #2d632b 6px 24px, #303030 24px 57px, transparent 57px);
}
.chrome-cell { background: linear-gradient(#74b0e5, #74b0e5) 6px 47px / 51px 3px no-repeat; }
.max-cell { background: linear-gradient(#74b0e5, #74b0e5) 2px 47px / 61px 3px no-repeat, linear-gradient(90deg, transparent 2px, #353535 2px 58px, #252525 58px); }
.tray { display: flex; align-items: center; margin-left: auto; width: 396px; }
.tray svg { width: 22px; height: 22px; margin-right: 8px; fill: none; stroke: #fff; stroke-width: 1.400; flex: none; }
.ink { width: 40px; height: 50px; margin-left: -4px; background: #2a2a2a; display: flex; align-items: center; justify-content: center; }
.ink svg { margin: 0; }
.clock { width: 84px; display: flex; flex-direction: column; align-items: center; color: #fff; font-size: 14.200px; line-height: 23px; }
.tray .action-center { margin-left: 14px; }
.peek { width: 1px; height: 50px; margin-left: auto; margin-right: 5px; background: #555; }
```
